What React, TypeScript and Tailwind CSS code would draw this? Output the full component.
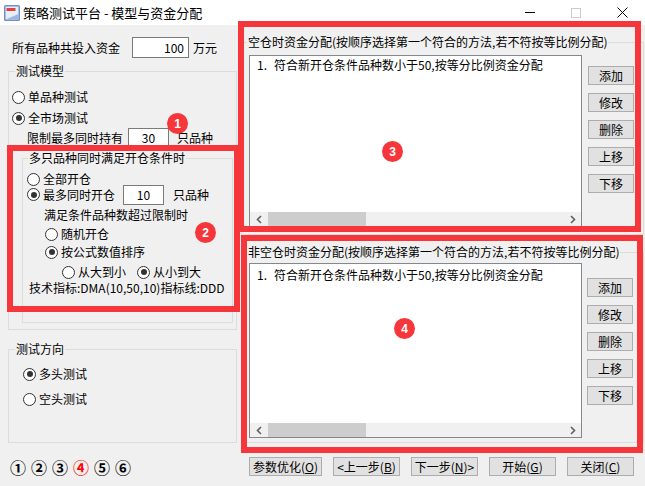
import React from 'react';

type RadioProps = { checked?: boolean; label: string; className?: string };

const Radio: React.FC<RadioProps> = ({ checked, label, className = '' }) => (
  <div className={`flex items-center h-[16px] ${className}`}>
    <span className="w-[13px] h-[13px] rounded-full border border-[#333333] bg-white flex items-center justify-center shrink-0">
      {checked && <span className="w-[6px] h-[6px] rounded-full bg-[#333333]" />}
    </span>
    <span className="ml-[3px] whitespace-nowrap">{label}</span>
  </div>
);

const Input: React.FC<{ value: string; className?: string }> = ({ value, className = '' }) => (
  <div className={`bg-white border border-[#7a7a7a] flex items-center shrink-0 ${className}`}>{value}</div>
);

const SideButton: React.FC<{ label: string }> = ({ label }) => (
  <div className="w-[46px] h-[19px] bg-[#e1e1e1] border border-[#adadad] flex items-center justify-center">
    {label}
  </div>
);

const Chevron: React.FC<{ dir: 'left' | 'right' }> = ({ dir }) => (
  <svg width="6" height="9" viewBox="0 0 6 9">
    <path
      d={dir === 'left' ? 'M5 1 L1.5 4.5 L5 8' : 'M1 1 L4.5 4.5 L1 8'}
      stroke="#606060"
      strokeWidth="1.6"
      fill="none"
    />
  </svg>
);

const ListBox: React.FC<{ className: string; itemClass: string }> = ({ className, itemClass }) => (
  <div className={`w-[333px] bg-white border border-[#828790] flex flex-col shrink-0 ${className}`}>
    <div className={`flex-1 flex pl-[7px] ${itemClass}`}>
      <span className="w-[17px]">1.</span>
      <span className="whitespace-nowrap">符合新开仓条件品种数小于50,按等分比例资金分配</span>
    </div>
    <div className="h-[14px] flex bg-[#f0f0f0]">
      <div className="w-[18px] flex items-center justify-center">
        <Chevron dir="left" />
      </div>
      <div className="w-[98px] bg-[#cdcdcd]" />
      <div className="flex-1" />
      <div className="w-[17px] flex items-center justify-center">
        <Chevron dir="right" />
      </div>
    </div>
  </div>
);

const Badge: React.FC<{ n: string; className: string }> = ({ n, className }) => (
  <div
    className={`absolute w-[21px] h-[21px] rounded-full bg-[#f5373b] text-white text-[12px] font-bold flex items-center justify-center [font-family:'Liberation_Sans',sans-serif] ${className}`}
  >
    {n}
  </div>
);

const BottomButton: React.FC<{ w: string; pre?: string; text: string; key_: string; post?: string }> = ({
  w,
  pre,
  text,
  key_,
  post,
}) => (
  <div className={`h-[19px] bg-[#e1e1e1] border border-[#adadad] flex items-center justify-center whitespace-nowrap ${w}`}>
    {pre}
    {text}(<span className="underline">{key_}</span>){post}
  </div>
);

export default function App() {
  return (
    <div className="relative w-[645px] h-[486px] overflow-hidden bg-[#f0f0f0] text-[12px] leading-[16px] text-black [font-family:'Noto_Sans_CJK_SC','Noto_Sans',sans-serif]">
      {/* Title bar */}
      <div className="h-[25px] bg-white flex items-center">
        <svg width="18" height="18" viewBox="0 0 18 18" className="ml-[3px]">
          <rect x="1" y="1" width="16" height="16" rx="1.5" fill="#6f8fc8" />
          <rect x="2.5" y="2.5" width="13" height="13" fill="#e8eef8" />
          <rect x="3.5" y="4" width="9" height="3" fill="#e04040" />
          <path d="M2.5 15.5 L15.5 10 L15.5 15.5 Z" fill="#9fb6e0" />
        </svg>
        <span className="ml-[2px] text-[13px]">策略测试平台 - 模型与资金分配</span>
        <div className="ml-auto flex h-full">
          <div className="w-[46px] flex items-center justify-center">
            <div className="w-[10px] h-[1px] bg-black" />
          </div>
          <div className="w-[46px] flex items-center justify-center">
            <div className="w-[10px] h-[10px] border border-[#cccccc]" />
          </div>
          <div className="w-[46px] flex items-center justify-center">
            <svg width="11" height="11" viewBox="0 0 11 11">
              <path d="M0.5 0.5 L10.5 10.5 M10.5 0.5 L0.5 10.5" stroke="#000" strokeWidth="1" />
            </svg>
          </div>
        </div>
      </div>

      <div className="flex">
        {/* Left column */}
        <div className="w-[237px] pl-[8px] flex flex-col">
          <div className="mt-[12px] h-[21px] flex items-center pl-[4px]">
            <span>所有品种共投入资金</span>
            <Input value="100" className="ml-[12px] w-[57px] h-[21px] justify-end pr-[4px]" />
            <span className="ml-[4px]">万元</span>
          </div>

          <fieldset className="mt-[5px] w-[229px] border border-[#dcdcdc] pb-[6px]">
            <legend className="ml-[6px] px-[1px] leading-[16px]">测试模型</legend>
            <Radio label="单品种测试" className="mt-[10px] ml-[3px]" />
            <Radio checked label="全市场测试" className="mt-[5px] ml-[3px]" />
            <div className="mt-[2px] h-[20px] ml-[18px] flex items-center">
              <span>限制最多同时持有</span>
              <Input value="30" className="ml-[5px] w-[41px] h-[20px] justify-center" />
              <span className="ml-[8px]">只品种</span>
            </div>

            <fieldset className="mt-[2px] ml-[13px] w-[211px] border border-[#dcdcdc] pb-[26px]">
              <legend className="ml-[5px] px-[1px] leading-[16px]">多只品种同时满足开仓条件时</legend>
              <Radio label="全部开仓" className="mt-[5px] ml-[4px]" />
              <div className="h-[15px] ml-[4px] flex items-center">
                <Radio checked label="最多同时开仓" />
                <Input value="10" className="ml-[8px] w-[41px] h-[20px] justify-center" />
                <span className="ml-[9px]">只品种</span>
              </div>
              <div className="mt-[5px] h-[16px] ml-[21px]">满足条件品种数超过限制时</div>
              <Radio label="随机开仓" className="mt-[3px] ml-[22px]" />
              <Radio checked label="按公式数值排序" className="mt-[2px] ml-[22px]" />
              <div className="mt-[4px] ml-[39px] flex">
                <Radio label="从大到小" />
                <Radio checked label="从小到大" className="ml-[11px]" />
              </div>
              <div className="h-[16px] ml-[6px] whitespace-nowrap">技术指标:DMA(10,50,10)指标线:DDD</div>
            </fieldset>
          </fieldset>

          <fieldset className="mt-[11px] w-[229px] border border-[#dcdcdc] pb-[35px]">
            <legend className="ml-[6px] px-[1px] leading-[16px]">测试方向</legend>
            <Radio checked label="多头测试" className="mt-[9px] ml-[14px]" />
            <Radio label="空头测试" className="mt-[9px] ml-[14px]" />
          </fieldset>

          <div className="mt-[16px] h-[16px] ml-[2px] flex items-center text-[16px] font-bold">
            <span className="w-[21px]">①</span>
            <span className="w-[21px]">②</span>
            <span className="w-[21px]">③</span>
            <span className="w-[21px] text-[#ff0000]">④</span>
            <span className="w-[21px]">⑤</span>
            <span className="w-[21px]">⑥</span>
          </div>
        </div>

        {/* Right column */}
        <div className="flex-1 pl-[4px] flex flex-col">
          <fieldset className="mt-[9px] w-[403px] border border-[#dcdcdc] pb-[7px]">
            <legend className="ml-[5px] px-[1px] leading-[16px] whitespace-nowrap">
              空仓时资金分配(按顺序选择第一个符合的方法,若不符按等比例分配)
            </legend>
            <div className="flex items-start">
              <ListBox className="mt-[5px] ml-[7px] h-[172px]" itemClass="pt-[1px]" />
              <div className="mt-[16px] ml-[6px] flex flex-col gap-[8px]">
                <SideButton label="添加" />
                <SideButton label="修改" />
                <SideButton label="删除" />
                <SideButton label="上移" />
                <SideButton label="下移" />
              </div>
            </div>
          </fieldset>

          <fieldset className="mt-[9px] w-[403px] border border-[#dcdcdc] pb-[4px]">
            <legend className="ml-[5px] px-[1px] leading-[16px] whitespace-nowrap">
              非空仓时资金分配(按顺序选择第一个符合的方法,若不符按等比例分配)
            </legend>
            <div className="flex items-start">
              <ListBox className="mt-[3px] ml-[7px] h-[175px]" itemClass="pt-[3px]" />
              <div className="mt-[18px] ml-[5px] flex flex-col gap-[8px]">
                <SideButton label="添加" />
                <SideButton label="修改" />
                <SideButton label="删除" />
                <SideButton label="上移" />
                <SideButton label="下移" />
              </div>
            </div>
          </fieldset>

          <div className="mt-[14px] ml-[8px] flex gap-[11px]">
            <BottomButton w="w-[73px]" text="参数优化" key_="O" />
            <BottomButton w="w-[67px]" pre="<" text="上一步" key_="B" />
            <BottomButton w="w-[67px]" text="下一步" key_="N" post=">" />
            <BottomButton w="w-[67px]" text="开始" key_="G" />
            <BottomButton w="w-[67px]" text="关闭" key_="C" />
          </div>
        </div>
      </div>

      {/* Annotation overlays */}
      <div className="absolute left-[7px] top-[145px] w-[233px] h-[167px] border-[6px] border-[#f5373b] pointer-events-none" />
      <div className="absolute left-[238px] top-[21px] w-[403px] h-[211px] border-[6px] border-[#f5373b] pointer-events-none" />
      <div className="absolute left-[241px] top-[235px] w-[402px] h-[218px] border-[6px] border-[#f5373b] pointer-events-none" />
      <Badge n="1" className="left-[167px] top-[113px]" />
      <Badge n="2" className="left-[195px] top-[222px]" />
      <Badge n="3" className="left-[382px] top-[141px]" />
      <Badge n="4" className="left-[394px] top-[318px]" />
    </div>
  );
}
